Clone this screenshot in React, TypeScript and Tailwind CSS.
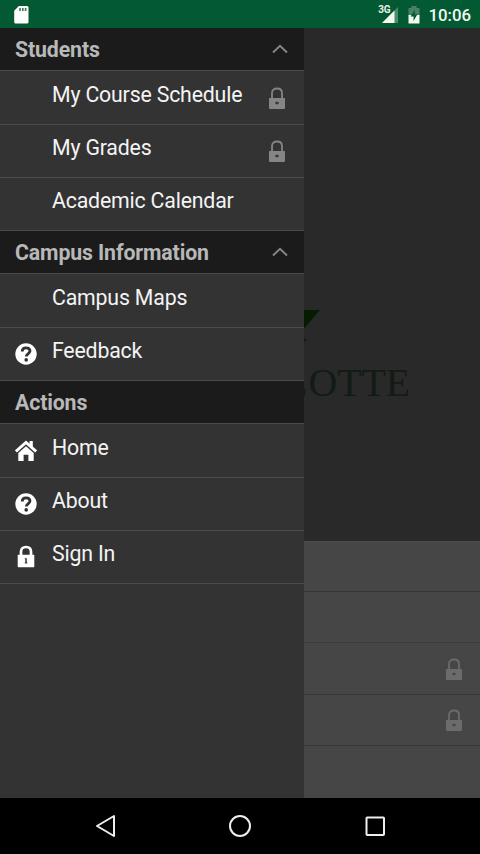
import type { ReactNode } from "react";

function PadlockOutline({ className }: { className: string }) {
  return (
    <svg viewBox="0 0 18 23" className={`h-[23px] w-[18px] ${className}`} fill="none">
      <path d="M4 12V6C4 3 6 1.5 9 1.5S14 3 14 6V12" stroke="currentColor" strokeWidth="1.8" />
      <path
        fillRule="evenodd"
        fill="currentColor"
        d="M1.5 11H16.5Q17 11 17 11.5V21Q17 22 16 22H2Q1 22 1 21V11.5Q1 11 1.5 11ZM9 14L8.3 15.3H7.2V16.7H8.3L9 18L9.7 16.7H10.8V15.3H9.7Z"
      />
    </svg>
  );
}

function HelpIcon() {
  return (
    <svg viewBox="0 0 22 22" className="size-[22px]" fill="none">
      <circle cx="11" cy="11" r="10.7" fill="#fff" />
      <path d="M7.2 8.6C7.2 6 8.8 4.8 11.1 4.8C13.4 4.8 15 6 15 8.1C15 10.6 11.3 10.6 11.3 13.6" stroke="#333" strokeWidth="2.8" />
      <circle cx="11.2" cy="16.9" r="1.8" fill="#333" />
    </svg>
  );
}

function HomeIcon() {
  return (
    <svg viewBox="0 0 22 22" className="size-[22px]" fill="none">
      <path d="M.9 11.4L11 2.5L21.1 11.4" stroke="#fff" strokeWidth="2.9" />
      <path d="M14.5 1H17.8V8L14.5 5.3Z" fill="#fff" />
      <path d="M3.3 13L11 6.2L18.7 13V21H13.4V14.7H8.6V21H3.3Z" fill="#fff" />
    </svg>
  );
}

function SignInIcon() {
  return (
    <svg viewBox="0 0 18 23" className="h-[23px] w-[18px]" fill="none">
      <path d="M4 11V6.7C4 3.7 6 2 9 2S14 3.7 14 6.7V11" stroke="#fff" strokeWidth="2.7" />
      <rect x="0.7" y="9.7" width="16.6" height="12.6" rx="0.7" fill="#fff" />
      <path d="M7.8 13.2H9.8V17.5H10.3V18.5H7.8V17.5H8.3V14.2H7.8Z" fill="#333" />
    </svg>
  );
}

function SectionHeader({ label, collapsible = false }: { label: string; collapsible?: boolean }) {
  return (
    <div className="flex h-[43px] items-center justify-between border-b border-[#4b4b4b] bg-[#1b1b1b] pr-4 pl-[15px]">
      <h2 className="text-[21.3px] leading-[25px] font-bold tracking-[-0.13px] text-[#b8b8b8]">{label}</h2>
      {collapsible && (
        <svg viewBox="0 0 16 10" className="mb-px h-[10px] w-4" fill="none">
          <path d="M1 8.5L8 1.8L15 8.5" stroke="#858585" strokeWidth="2" />
        </svg>
      )}
    </div>
  );
}

function MenuItem({ label, icon, locked = false }: { label: string; icon?: ReactNode; locked?: boolean }) {
  return (
    <li className="flex h-[53px] items-end border-b border-[#4b4b4b] pr-[18px] first:h-[54px]">
      <span className="flex w-[52px] justify-center pr-px pb-[15px]">{icon}</span>
      <span className="flex-1 pb-[17px] text-[21.3px] leading-[25px] tracking-[-0.18px] whitespace-nowrap text-[#f4f4f4]">{label}</span>
      {locked && <PadlockOutline className="mb-[14px] text-[#858585]" />}
    </li>
  );
}

function Drawer() {
  return (
    <nav className="absolute inset-y-0 left-0 w-[304px] bg-[#333333]">
      <SectionHeader label="Students" collapsible />
      <ul>
        <MenuItem label="My Course Schedule" locked />
        <MenuItem label="My Grades" locked />
        <MenuItem label="Academic Calendar" />
      </ul>
      <SectionHeader label="Campus Information" collapsible />
      <ul>
        <MenuItem label="Campus Maps" />
        <MenuItem label="Feedback" icon={<HelpIcon />} />
      </ul>
      <SectionHeader label="Actions" />
      <ul>
        <MenuItem label="Home" icon={<HomeIcon />} />
        <MenuItem label="About" icon={<HelpIcon />} />
        <MenuItem label="Sign In" icon={<SignInIcon />} />
      </ul>
    </nav>
  );
}

function StatusBar() {
  return (
    <header className="flex h-7 items-center justify-between bg-[#035932] pr-[9px] pl-[14px]">
      <svg viewBox="0 0 15 18" className="mt-px h-[18px] w-[15px]">
        <path d="M4.8 0H13Q14.5 0 14.5 1.5V16Q14.5 17.5 13 17.5H1.7Q.2 17.5 .2 16V4.8Z" fill="#fff" />
        <path d="M5.2 2H6.8V5H5.2ZM8 2H9.6V5H8ZM10.8 2H12.4V5H10.8Z" fill="#3a7659" />
      </svg>
      <div className="flex h-full items-center">
        <span className="mr-[-8px] mb-[8px] text-[10px] leading-[10px] font-bold tracking-[-0.2px] text-[#e5f3eb]">3G</span>
        <svg viewBox="0 0 17 16" className="mt-px h-4 w-[17px]">
          <path d="M0 16L16 0V16Z" fill="#4a8b6c" />
          <path d="M0 16L12.5 3.5V16Z" fill="#f0faf3" />
        </svg>
        <svg viewBox="0 0 12 18" className="mt-px ml-[9px] h-[18px] w-3">
          <path d="M3.5 0H8.5V2H11.5V10H.5V2H3.5Z" fill="#4b8068" />
          <path d="M.5 9H11.5V17.5H.5Z" fill="#f0faf3" />
          <path d="M6.8 3.5L2.6 10.6H5.5V15L9.5 8.3H6.8Z" fill="#075c36" />
        </svg>
        <time className="mt-[2px] ml-[8px] text-[16.8px] leading-5 font-medium text-[#f0faf3]">10:06</time>
      </div>
    </header>
  );
}

function PageBehind() {
  return (
    <main className="flex h-full flex-col items-end">
      <div className="flex h-[513px] w-full flex-col items-end bg-[#292929] pt-[282px]">
        <svg viewBox="0 0 60 36" className="mr-[160px] h-9 w-[60px]">
          <path d="M0 0H60L36 28H0Z" fill="#061c00" />
          <path d="M42 28L47 29L43 33Z" fill="#111b12" />
        </svg>
        <div className="mt-[14px] mr-[70px] font-['Liberation_Serif',serif] text-[40px] leading-[46px] tracking-[-0.2px] text-[#121b14]">
          <span className="tracking-[1px]">L</span>OTTE
        </div>
      </div>
      <div className="flex w-full flex-1 flex-col border-t border-[#4d4d4d] bg-[#464646]">
        <div className="h-[50px] border-b border-[#363636]" />
        <div className="h-[51px] border-b border-[#3b3b3b]" />
        <div className="flex h-[52px] items-center justify-end border-b border-[#393939] pt-[2px] pr-[17px]">
          <PadlockOutline className="text-[#6b6b6b]" />
        </div>
        <div className="flex h-[51px] items-center justify-end border-b border-[#393939] pt-px pr-[17px]">
          <PadlockOutline className="text-[#6b6b6b]" />
        </div>
      </div>
    </main>
  );
}

function NavigationBar() {
  return (
    <footer className="flex h-14 items-center justify-between bg-black px-[93px]">
      <svg viewBox="0 0 24 24" className="size-6" fill="none" stroke="#eee" strokeWidth="2">
        <path d="M21 2V22L4 12Z" strokeLinejoin="round" />
      </svg>
      <svg viewBox="0 0 24 24" className="size-6" fill="none" stroke="#eee" strokeWidth="2">
        <circle cx="12" cy="12" r="10" />
      </svg>
      <svg viewBox="0 0 24 24" className="size-6" fill="none" stroke="#eee" strokeWidth="2">
        <rect x="3.5" y="3.5" width="17.5" height="17.5" rx=".7" />
      </svg>
    </footer>
  );
}

export default function App() {
  return (
    <div className="flex h-[854px] w-[480px] flex-col overflow-hidden bg-black font-[Roboto,sans-serif]">
      <StatusBar />
      <div className="relative h-[770px]">
        <PageBehind />
        <Drawer />
      </div>
      <NavigationBar />
    </div>
  );
}
